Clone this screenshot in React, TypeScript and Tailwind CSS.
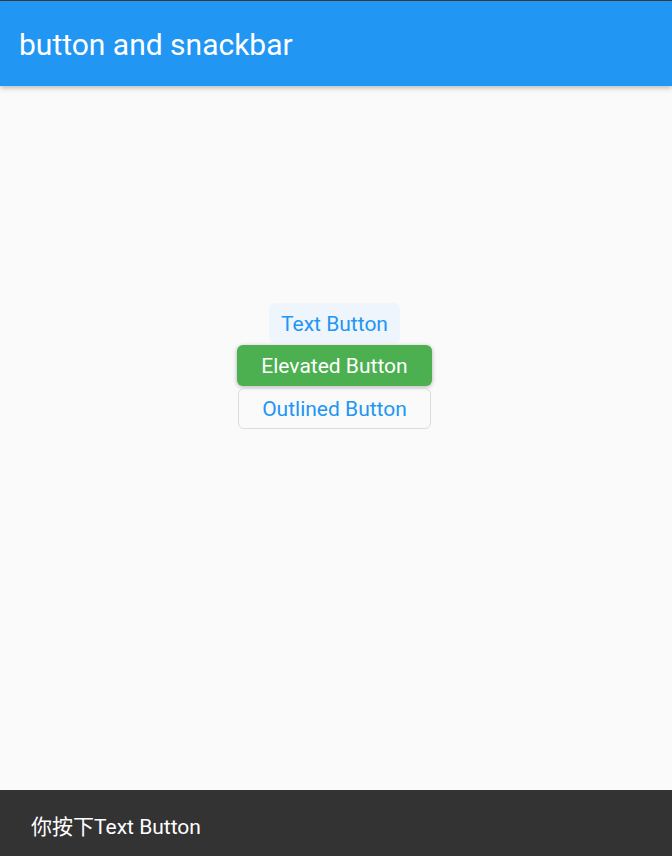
import React from "react";

export default function App() {
  const font = { fontFamily: 'Roboto, "Noto Sans CJK SC", sans-serif' };
  return (
    <div className="flex h-[856px] w-[672px] flex-col overflow-hidden bg-[#fafafa]" style={font}>
      <div className="h-px bg-[#3c3c3c]" />
      <div className="relative z-10 flex h-[85px] items-center bg-[#2196f3] px-[19px] pt-[2px] shadow-[0_2px_5px_rgba(0,0,0,0.25)]">
        <span className="text-[30px] leading-none text-white">button and snackbar</span>
      </div>
      <div className="flex flex-1 flex-col items-center pr-[3px] pt-[217px]">
        <button className="flex h-[40px] items-center rounded-[6px] bg-[#eff5fc] px-[12px] pt-[2px] text-[21px] leading-none text-[#2196f3]">
          Text Button
        </button>
        <button className="mt-[2px] flex h-[41px] w-[195px] items-center justify-center rounded-[6px] bg-[#4caf50] pt-[2px] text-[21px] leading-none text-white shadow-[0_1px_4px_rgba(0,0,0,0.3)]">
          Elevated Button
        </button>
        <button className="mt-[2px] flex h-[41px] w-[193px] items-center justify-center rounded-[6px] border-[1.5px] border-[#dcdcdc] pt-[2px] text-[21px] leading-none text-[#2196f3]">
          Outlined Button
        </button>
      </div>
      <div className="flex h-[66px] items-center bg-[#333333] px-[31px] pt-[9px]">
        <span className="text-[21px] leading-none text-white">你按下Text Button</span>
      </div>
    </div>
  );
}
